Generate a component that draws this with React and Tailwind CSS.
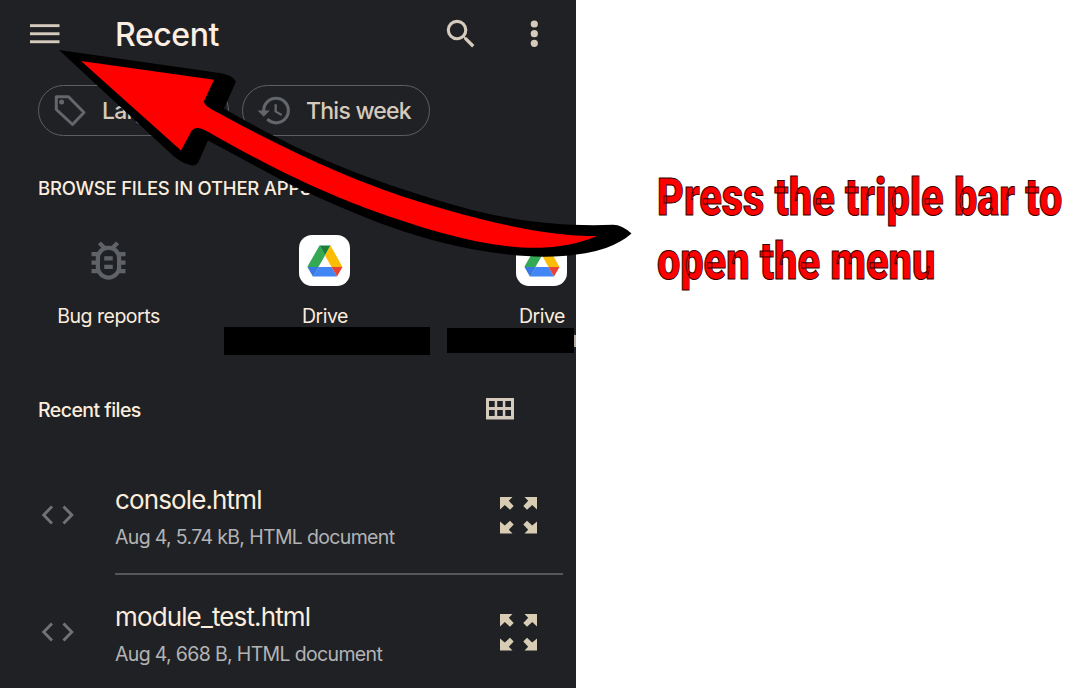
import React from "react";
import { MdSearch, MdHistory, MdOutlineBugReport } from "react-icons/md";

function MenuIcon() {
  return (
    <svg width="30" height="20" viewBox="0 0 30 20" className="shrink-0" fill="#d5cabb">
      <rect x="0" y="0.2" width="29.5" height="2.9" />
      <rect x="0" y="8.3" width="29.5" height="2.9" />
      <rect x="0" y="16.3" width="29.5" height="2.9" />
    </svg>
  );
}

function MoreIcon() {
  return (
    <svg width="8" height="28" viewBox="0 0 8 28" className="shrink-0" fill="#d5cabb">
      <circle cx="4.3" cy="4" r="3.6" />
      <circle cx="4.3" cy="13.7" r="3.6" />
      <circle cx="4.3" cy="23.3" r="3.6" />
    </svg>
  );
}

function TagIcon() {
  return (
    <svg width="34" height="34" viewBox="0 0 34 34" className="shrink-0" fill="none">
      <path d="M3.3 2.8H15.5L31 18.500 19.500 30.500 3.300 15.500Z" stroke="#63666a" strokeWidth="3" strokeLinejoin="round" />
      <circle cx="8.6" cy="8.1" r="2.5" fill="#63666a" />
    </svg>
  );
}

function DriveTile() {
  return (
    <div className="flex size-[51px] items-center justify-center rounded-[13px] bg-white">
      <svg width="36" height="32" viewBox="0 0 36 32">
        <path d="M12.5 0.5 18 10.5 6 31.5 0.5 21.5Z" fill="#34a853" />
        <path d="M12.5 0.5H23.5L18 10.5Z" fill="#188038" />
        <path d="M23.5 0.5 35.5 22H24.5L18 10.5Z" fill="#fbbc04" />
        <path d="M12 22H24.5L30 31.5H6Z" fill="#4285f4" />
        <path d="M0.5 22H12L6 31.5Z" fill="#3b78e7" />
        <path d="M24.5 22H35.5L30 31.5Z" fill="#ea4335" />
      </svg>
    </div>
  );
}

function GridIcon() {
  return (
    <svg width="28" height="22" viewBox="0 0 28 22" fillRule="evenodd" fill="#d5cabb">
      <path d="M0 0H28V21.5H0ZM3 3V9H8.7V3ZM11.2 3V9H16.8V3ZM19.3 3V9H25V3ZM3 12V18H8.7V12ZM11.2 12V18H16.8V12ZM19.3 12V18H25V12Z" />
    </svg>
  );
}

function CodeIcon() {
  return (
    <svg width="33" height="20" viewBox="0 0 33 20" fill="none" stroke="#6f7275" strokeWidth="2.9">
      <path d="M11 1.500 2.700 10 11 18.500M22.500 1.500 30.800 10 22.500 18.500" />
    </svg>
  );
}

function ExpandIcon() {
  return (
    <svg width="37" height="37" viewBox="0 0 37 37" fill="#d8ccb4">
      <path d="M0 0H12.5L8.800 3.800 13.700 9 10 12.800 4.800 8 0 12.500Z" />
      <path d="M37 0V12.500L32.200 8 27 12.800 23.300 9 28.200 3.800 24.500 0Z" />
      <path d="M0 36.500V24.500L4.800 28.500 10 23.700 13.700 27.500 8.800 32.700 12.500 36.500Z" />
      <path d="M37 36.500H24.500L28.200 32.700 23.300 27.500 27 23.700 32.200 28.500 37 24.500Z" />
    </svg>
  );
}

function FileRow({ name, meta, divider }) {
  return (
    <div className="flex h-[117px] pl-[41px]">
      <div className="w-[74px] pt-[47px]">
        <CodeIcon />
      </div>
      <div className={"flex w-[448px] justify-between border-b-2 pr-[26px] " + (divider ? "border-[#55585b]" : "border-transparent")}>
        <div>
          <div className="pt-[25px] text-[26px] leading-[34px] tracking-[-0.87px] text-[#fbeddd]">{name}</div>
          <div className="pt-[7px] text-[19.5px] leading-[26px] tracking-[-0.66px] text-[#b2b3b5]">{meta}</div>
        </div>
        <div className="pt-[39px]">
          <ExpandIcon />
        </div>
      </div>
    </div>
  );
}

function Arrow() {
  return (
    <svg width="640" height="270" viewBox="0 0 640 270" className="pointer-events-none absolute top-0 left-0">
      <path
        d="M59 50 216 72.5Q232 74 236 81.5L224 108.5Q252 125 280 139C320 160 390 188 472 210C520 222 565 226.500 613 224.8Q622 225 631.5 233.5Q622 242 606 248C560 263 500 257 440 242C395 231 340 208 290 184.5L208 140.5 198 163Q195 167 189 164.5Q182 163 174 156.500Z"
        fill="#000"
      />
      <path
        d="M81 61 214 79.8 204 101Q203 104 212 109.5C235 122 257 134 280 145C330 170 385 193 447 210C500 225 550 236 597 236C580 243 567 246 545 247.6C490 250 430 231 371 210C330 195 280 173 208 131.7Q196 124.500 191.5 131L181 150.500Z"
        fill="#f00"
      />
    </svg>
  );
}

export default function App() {
  return (
    <div className="relative flex h-[688px] w-[1080px] overflow-hidden bg-white font-['Inter','Liberation_Sans',sans-serif]">
      <main className="h-[688px] w-[576px] shrink-0 overflow-hidden bg-[#202125]">
        <header className="flex h-[68px] items-center pl-[30px]">
          <MenuIcon />
          <h1 className="ml-[55px] w-[327px] pt-[2px] text-[32px] font-medium leading-[40px] tracking-[-0.4px] text-[#fcefe2]">Recent</h1>
          <MdSearch size={38} color="#d5cabb" className="shrink-0" />
          <div className="ml-[50px]">
            <MoreIcon />
          </div>
        </header>

        <div className="flex gap-[13px] pt-[17px] pl-[38px] text-[23px] font-medium tracking-[-0.75px] text-[#d5cabb]">
          <div className="flex h-[51px] w-[191px] items-center gap-[15px] rounded-full border-[1.5px] border-[#5c5f62] pl-[14px] whitespace-nowrap">
            <TagIcon />
            <span className="pt-[2px]">Large files</span>
          </div>
          <div className="flex h-[51px] w-[188px] items-center gap-[13px] rounded-full border-[1.5px] border-[#5c5f62] pl-[13px] whitespace-nowrap">
            <MdHistory size={37} color="#63666a" className="shrink-0" />
            <span className="pt-[2px]">This week</span>
          </div>
        </div>

        <h2 className="pt-[40px] pl-[38px] text-[18.5px] font-medium leading-[24px] tracking-[-0.22px] text-[#fbeddd]">
          BROWSE FILES IN OTHER APPS
        </h2>

        <div className="flex h-[155px] text-[19.5px] leading-[26px] tracking-[-0.5px] text-[#fbeddd]">
          <div className="flex w-[216px] shrink-0 flex-col items-center pt-[35px]">
            <MdOutlineBugReport size={51} color="#5f6266" />
            <span className="mt-[17px] pl-[1px]">Bug reports</span>
          </div>
          <div className="flex w-[217px] shrink-0 flex-col items-center pt-[35px]">
            <DriveTile />
            <span className="mt-[17px] pl-[1px]">Drive</span>
            <div className="mt-[-2px] ml-[4px] h-[28px] w-[206px] bg-black" />
          </div>
          <div className="flex w-[217px] shrink-0 flex-col items-center pt-[35px]">
            <DriveTile />
            <span className="mt-[17px] pl-[1px]">Drive</span>
            <div className="mt-[-1px] flex w-[189px] items-center">
              <div className="h-[25px] w-[127px] bg-black" />
              <div className="h-[12px] w-[2px] bg-[#b5a99d]" />
            </div>
          </div>
        </div>

        <div className="flex h-[103px] items-center pt-[5px] pl-[38px]">
          <h2 className="w-[448px] pt-[2px] text-[19.5px] font-medium leading-[26px] tracking-[-0.55px] text-[#fbeddd]">Recent files</h2>
          <GridIcon />
        </div>

        <FileRow name="console.html" meta="Aug 4, 5.74 kB, HTML document" divider />
        <FileRow name="module_test.html" meta="Aug 4, 668 B, HTML document" />
      </main>

      <aside className="pt-[166px] pl-[81px]">
        <p className="w-[640px] origin-left scale-x-[0.812] font-['Roboto',sans-serif] text-[51px] font-black leading-[64px] text-[#f00] [-webkit-text-stroke:1px_#300]">
          Press the triple bar to
          <br />
          open the menu
        </p>
      </aside>

      <Arrow />
    </div>
  );
}
